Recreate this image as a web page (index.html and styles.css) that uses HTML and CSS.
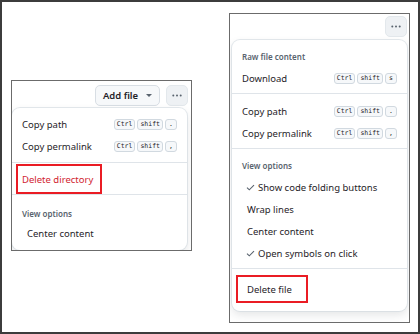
FILE: index.html
```html
<!DOCTYPE html>
<html lang="en">

<head>
	<meta charset="UTF-8">
	<title>File actions menus</title>
	<link rel="stylesheet" href="styles.css">
</head>

<body>
	<div class="frame">

		<div class="panel panel-dir">
			<div class="panel-head">
				<button class="btn btn-add">Add file <span class="caret"></span></button>
				<button class="btn btn-more" aria-label="More options">
					<svg width="10" height="3" viewBox="0 0 10 3"><circle cx="1.3" cy="1.5" r="1" /><circle cx="5" cy="1.5" r="1" /><circle cx="8.7" cy="1.5" r="1" /></svg>
				</button>
			</div>
			<div class="menu menu-dir">
				<div class="item">
					<span class="item-label">Copy path</span>
					<span class="keys"><kbd>Ctrl</kbd><kbd>shift</kbd><kbd>.</kbd></span>
				</div>
				<div class="item">
					<span class="item-label">Copy permalink</span>
					<span class="keys"><kbd>Ctrl</kbd><kbd>shift</kbd><kbd>,</kbd></span>
				</div>
				<div class="divider"></div>
				<div class="item item-hl">
					<span class="hl danger">Delete directory</span>
				</div>
				<div class="divider divider-tight"></div>
				<div class="group-title">View options</div>
				<div class="item item-indent">
					<span class="item-label">Center content</span>
				</div>
			</div>
		</div>

		<div class="panel panel-file">
			<div class="panel-head">
				<button class="btn btn-more" aria-label="More options">
					<svg width="10" height="3" viewBox="0 0 10 3"><circle cx="1.3" cy="1.5" r="1" /><circle cx="5" cy="1.5" r="1" /><circle cx="8.7" cy="1.5" r="1" /></svg>
				</button>
			</div>
			<div class="menu menu-file">
				<div class="group-title first">Raw file content</div>
				<div class="item">
					<span class="item-label">Download</span>
					<span class="keys"><kbd>Ctrl</kbd><kbd>shift</kbd><kbd>s</kbd></span>
				</div>
				<div class="divider"></div>
				<div class="item">
					<span class="item-label">Copy path</span>
					<span class="keys"><kbd>Ctrl</kbd><kbd>shift</kbd><kbd>.</kbd></span>
				</div>
				<div class="item">
					<span class="item-label">Copy permalink</span>
					<span class="keys"><kbd>Ctrl</kbd><kbd>shift</kbd><kbd>,</kbd></span>
				</div>
				<div class="divider"></div>
				<div class="group-title">View options</div>
				<div class="item item-check">
					<svg class="check" width="9" height="7" viewBox="0 0 9 7"><path d="M1 3.6 3.3 5.8 8 1.2" /></svg>
					<span class="item-label">Show code folding buttons</span>
				</div>
				<div class="item item-indent">
					<span class="item-label">Wrap lines</span>
				</div>
				<div class="item item-indent">
					<span class="item-label">Center content</span>
				</div>
				<div class="item item-check">
					<svg class="check" width="9" height="7" viewBox="0 0 9 7"><path d="M1 3.6 3.3 5.8 8 1.2" /></svg>
					<span class="item-label">Open symbols on click</span>
				</div>
				<div class="divider"></div>
				<div class="item item-hl item-hl-file">
					<span class="hl">Delete file</span>
				</div>
			</div>
		</div>

	</div>
</body>

</html>
```

FILE: styles.css
```css
body {
	margin: 0;
	background-color: #fff;
	font-family: "Noto Sans", "Open Sans", sans-serif;
	color: #1f2328;
}

.frame {
	width: 420px;
	height: 334px;
	box-sizing: border-box;
	border: 2px solid #3c3c3c;
	display: flex;
	align-items: flex-start;
	gap: 37px;
	padding: 11px 0 0 9px;
}

.panel {
	width: 181px;
	box-sizing: border-box;
	border: 1px solid #6b6b6b;
	background-color: #fff;
	overflow: hidden;
	display: flex;
	flex-direction: column;
}

.panel-dir {
	margin-top: 67px;
	height: 171px;
}

.panel-file {
	height: 310px;
}

.panel-head {
	display: flex;
	justify-content: flex-end;
	align-items: flex-start;
	gap: 6px;
}

.panel-dir .panel-head {
	height: 28px;
	padding: 4px 3px 0 0;
	box-sizing: border-box;
}

.panel-file .panel-head {
	height: 26px;
	padding: 2px 2px 0 0;
	box-sizing: border-box;
}

.btn {
	font-family: inherit;
	color: #1f2328;
	border: 1px solid #d8dee4;
	border-radius: 5px;
	background-color: #f6f8fa;
	padding: 0;
	display: flex;
	align-items: center;
	justify-content: center;
	box-sizing: border-box;
}

.btn-add {
	width: 65px;
	height: 21px;
	font-size: 9.5px;
	font-weight: 600;
	gap: 8px;
}

.caret {
	width: 0;
	height: 0;
	border-left: 3px solid transparent;
	border-right: 3px solid transparent;
	border-top: 3px solid #59636e;
}

.btn-more {
	width: 22px;
	height: 21px;
	background-color: #eef1f4;
	border-color: #e3e8ec;
}

.btn-more svg {
	fill: #59636e;
}

.menu {
	width: 175px;
	box-sizing: border-box;
	background-color: #fff;
	border-radius: 8px;
	box-shadow: 0 0 0 1px rgba(209, 217, 224, 0.6), 0 4px 10px rgba(37, 41, 46, 0.12);
	font-size: 9.5px;
}

.menu-dir {
	margin-left: 0;
	padding: 5px 0 6px;
	flex: 1;
}

.menu-file {
	margin-left: 2px;
	padding: 0 0 8px;
}

.item {
	height: 22px;
	display: flex;
	align-items: center;
	padding: 0 10px;
	white-space: nowrap;
}

.item-label {
	flex: 1;
}

.item-indent {
	padding-left: 15px;
}

.item-check {
	padding-left: 14px;
}

.check {
	fill: none;
	stroke: #59636e;
	stroke-width: 1.1;
	margin-right: 3px;
}

.keys {
	display: flex;
	gap: 2px;
}

kbd {
	font-family: "DejaVu Sans Mono", monospace;
	font-size: 6.5px;
	line-height: 9px;
	height: 11px;
	min-width: 12px;
	box-sizing: border-box;
	padding: 0 2px;
	text-align: center;
	color: #1f2328;
	background-color: #f6f8fa;
	border: 1px solid #d1d9e0;
	border-radius: 3px;
}

.divider {
	height: 1px;
	background-color: #dfe4e9;
	margin: 5px 0 6px;
}

.divider-tight {
	margin: 0;
}

.item-hl {
	height: auto;
	padding-left: 4px;
	margin-top: -5px;
}

.hl {
	border: 2px solid #ea1c24;
	height: 30px;
	box-sizing: border-box;
	display: flex;
	align-items: center;
	padding: 0 7px 0 4px;
}

.danger {
	color: #d1242f;
}

.item-hl-file {
	padding-left: 4px;
	margin-top: 2px;
}

.item-hl-file .hl {
	height: 28px;
	padding: 0 14px 0 9px;
}

.group-title {
	font-size: 8px;
	font-weight: 600;
	color: #59636e;
	line-height: 12px;
	padding: 13px 10px 2px;
}

.menu-file .group-title {
	padding: 5px 10px 4px;
}

.menu-file .group-title.first {
	padding: 11px 10px 4px;
}

.menu-file .divider {
	margin: 4px 0 6px;
}

.menu-file .item-hl {
	margin-top: 3px;
}
```
